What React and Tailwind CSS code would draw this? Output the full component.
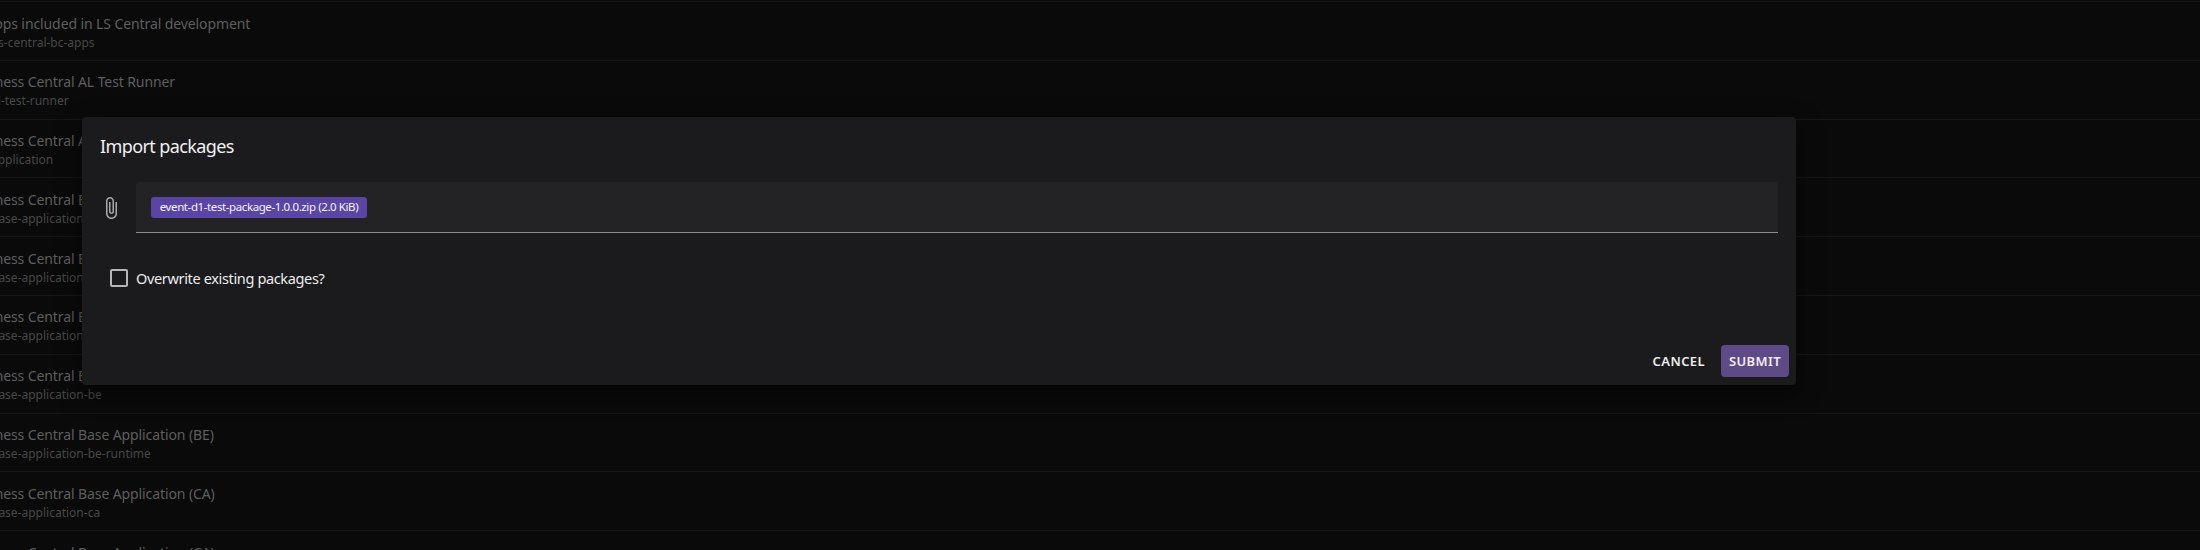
import React from 'react';

const packages = [
  { title: 'LS Apps included in LS Central development', id: 'cro.ls-central-bc-apps' },
  { title: 'Business Central AL Test Runner', id: 'bc-al-test-runner' },
  { title: 'Business Central Application', id: 'bc-application' },
  { title: 'Business Central Base Application', id: 'bc-base-application' },
  { title: 'Business Central Base Application', id: 'bc-base-application' },
  { title: 'Business Central Base Application', id: 'bc-base-application' },
  { title: 'Business Central Base Application', id: 'bc-base-application-be' },
  { title: 'Business Central Base Application (BE)', id: 'bc-base-application-be-runtime' },
  { title: 'Business Central Base Application (CA)', id: 'bc-base-application-ca' },
  { title: 'Business Central Base Application (CA)', id: 'bc-base-application-ca' },
];

function PackageRow({ title, id }) {
  return (
    <div className="h-[58.8px] border-b border-[#161616] -ml-[33px] pt-[11.5px] whitespace-nowrap">
      <div className="text-[14px] leading-[20px] tracking-[-0.1px] text-[#5e5e5e]">{title}</div>
      <div className="pl-[7px] text-[12px] leading-[17px] text-[#474747]">{id}</div>
    </div>
  );
}

export default function App() {
  return (
    <div className="relative h-[550px] w-[2200px] overflow-hidden bg-[#0a0a0a] font-['Noto_Sans',sans-serif]">
      <div className="mt-px border-t border-[#161616]">
        {packages.map((pkg, index) => (
          <PackageRow key={index} title={pkg.title} id={pkg.id} />
        ))}
      </div>

      {/* Import dialog */}
      <div className="absolute left-[82px] top-[117px] flex h-[268px] w-[1714px] flex-col rounded bg-[#1b1b1e] shadow-[0_8px_24px_rgba(0,0,0,0.5)]">
        <h2 className="px-[18px] pt-[15px] pb-px text-[18px] leading-[28px] tracking-[-0.6px] text-[#f2f2f2]">Import packages</h2>

        <div className="mt-[21px] flex items-center pl-[17px] pr-[18px]">
          <svg viewBox="0 0 24 24" className="h-[24px] w-[24px] fill-[#a9a9aa]">
            <path d="M16.5 6v11.5c0 2.21-1.79 4-4 4s-4-1.79-4-4V5c0-1.38 1.12-2.5 2.5-2.5s2.5 1.12 2.5 2.5v10.5c0 .55-.45 1-1 1s-1-.45-1-1V6H10v9.5c0 1.38 1.12 2.5 2.5 2.5s2.5-1.12 2.5-2.5V5c0-2.21-1.79-4-4-4S7 2.79 7 5v12.5c0 3.04 2.46 5.5 5.5 5.5s5.5-2.46 5.5-5.5V6h-1.5z" />
          </svg>
          <div className="ml-[13px] flex h-[51px] flex-1 items-center rounded-t border-b border-[#8a8a8b] bg-[#232326] pl-[15px]">
            <span className="flex h-[21px] w-[216px] items-center justify-center rounded-[3px] bg-[#5a45a5] text-[11.5px] tracking-[-0.4px] text-[#f4f2fb]">
              event-d1-test-package-1.0.0.zip (2.0 KiB)
            </span>
          </div>
        </div>

        <label className="mt-[33px] flex items-center pl-[25px]">
          <svg viewBox="0 0 24 24" className="h-[24px] w-[24px] fill-[#b5b5b6]">
            <path d="M19 5v14H5V5h14m0-2H5c-1.1 0-2 .9-2 2v14c0 1.1.9 2 2 2h14c1.1 0 2-.9 2-2V5c0-1.1-.9-2-2-2z" />
          </svg>
          <span className="ml-[5px] pt-px text-[14.5px] tracking-[-0.35px] text-[#ececec]">Overwrite existing packages?</span>
        </label>

        <div className="mt-auto flex items-center justify-end gap-[16px] pb-[8px] pr-[7px]">
          <button className="pt-[2px] text-[13px] font-semibold tracking-[0.4px] text-[#ededed]">CANCEL</button>
          <button className="h-[32px] w-[68px] rounded-[4px] bg-[#5e4a87] pt-[2px] text-[13px] font-semibold tracking-[0.4px] text-[#f0edf6]">SUBMIT</button>
        </div>
      </div>
    </div>
  );
}
